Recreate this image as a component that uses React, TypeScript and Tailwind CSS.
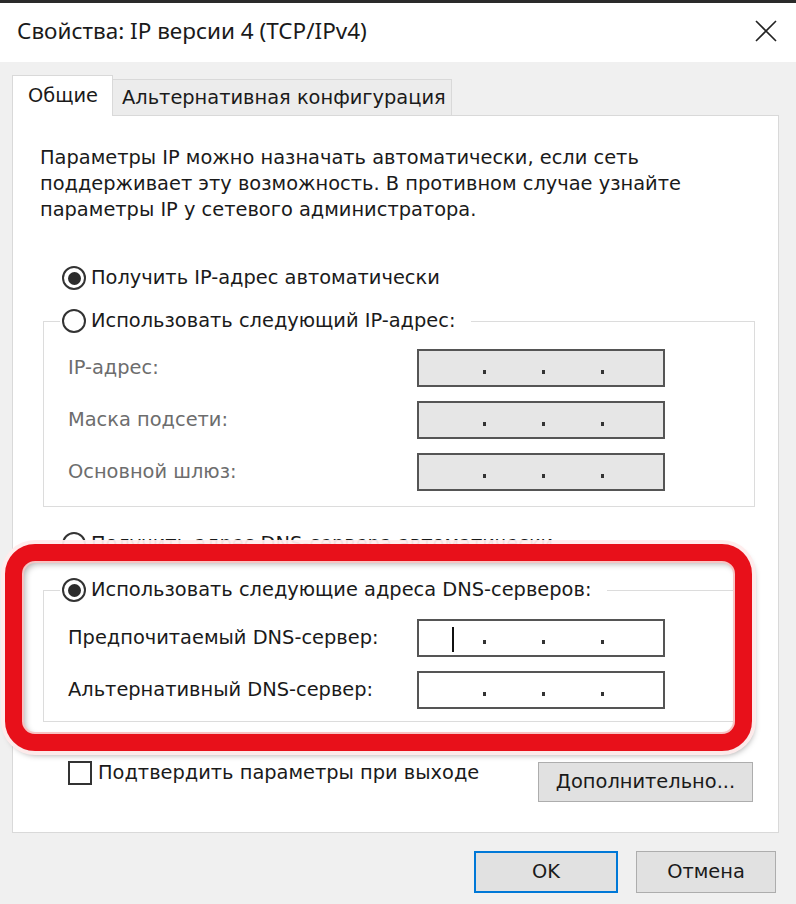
import React from "react";

function Radio({ checked }: { checked?: boolean }) {
  return (
    <span className="w-[24px] h-[24px] rounded-full border-2 border-[#333] bg-white flex items-center justify-center shrink-0">
      {checked && <span className="w-[13px] h-[13px] rounded-full bg-[#2b2b2b]" />}
    </span>
  );
}

function IpInput({ disabled, cursor }: { disabled?: boolean; cursor?: boolean }) {
  return (
    <div
      className={
        "relative h-[38px] w-[248px] border-2 border-[#555] flex items-end pb-[11px] pl-[64px] gap-[56px] " +
        (disabled ? "bg-[#e6e6e6]" : "bg-white")
      }
    >
      {cursor && <span className="absolute left-[33px] top-[6px] w-[2px] h-[25px] bg-[#111]" />}
      <span className="w-[3px] h-[4px] bg-[#333]" />
      <span className="w-[3px] h-[4px] bg-[#333]" />
      <span className="w-[3px] h-[4px] bg-[#333]" />
    </div>
  );
}

function Row({ label, disabled, cursor }: { label: string; disabled?: boolean; cursor?: boolean }) {
  return (
    <div className="grid grid-cols-[373px_248px] items-center h-[38px]">
      <span className={"pl-[24px] " + (disabled ? "text-[#6d6d6d]" : "text-[#1a1a1a]")}>{label}</span>
      <IpInput disabled={disabled} cursor={cursor} />
    </div>
  );
}

export default function App() {
  return (
    <div className="w-[796px] h-[904px] bg-[#f0f0f0] relative overflow-hidden font-['DejaVu_Sans',sans-serif] text-[19.4px] text-[#1a1a1a] leading-[26px]">
      <div className="h-[3px] bg-[#2a2a2a]" />
      <div className="h-[59px] bg-white flex items-center justify-between pl-[17px] pr-[18px]">
        <span className="font-['Noto_Sans',sans-serif] text-[22.5px] text-[#1a1a1a] -mt-[4px]">
          Свойства: IP версии 4 (TCP/IPv4)
        </span>
        <svg width="24" height="24" viewBox="0 0 24 24" className="-mt-[4px]">
          <path d="M2 2 L22 22 M22 2 L2 22" stroke="#222" strokeWidth="1.6" fill="none" />
        </svg>
      </div>

      <div className="pl-[12px] pr-[17px] pt-[13px]">
        <div className="flex items-start h-[40px] relative z-10">
          <div className="h-[41px] w-[101px] bg-white border-l border-t border-r border-[#d9d9d9] flex items-center pl-[15px] pb-[1px]">
            Общие
          </div>
          <div className="mt-[4px] h-[36px] w-[339px] bg-[#ececec] border-t border-r border-[#d9d9d9] flex items-center pl-[9px] whitespace-nowrap">
            Альтернативная конфигурация
          </div>
        </div>

        <div className="h-[718px] bg-white border border-[#d9d9d9] flex flex-col">
          <p className="mt-[29px] ml-[27px] whitespace-nowrap">
            Параметры IP можно назначать автоматически, если сеть
            <br />
            поддерживает эту возможность. В противном случае узнайте
            <br />
            параметры IP у сетевого администратора.
          </p>

          <div className="mt-[42px] ml-[49px] h-[26px] flex items-center gap-[5px]">
            <Radio checked />
            <span>Получить IP-адрес автоматически</span>
          </div>

          <fieldset className="mt-[17px] ml-[30px] mr-[23px] border border-[#dcdcdc] pb-[15px]">
            <legend className="ml-[16px] pl-[2px] pr-[16px] h-[26px] flex items-center gap-[5px]">
              <Radio />
              <span>Использовать следующий IP-адрес:</span>
            </legend>
            <div className="pt-[15px] flex flex-col gap-[14px]">
              <Row label="IP-адрес:" disabled />
              <Row label="Маска подсети:" disabled />
              <Row label="Основной шлюз:" disabled />
            </div>
          </fieldset>

          <div className="mt-[24px] ml-[49px] h-[26px] flex items-center gap-[5px]">
            <Radio />
            <span>Получить адрес DNS-сервера автоматически</span>
          </div>

          <fieldset className="mt-[20px] ml-[30px] mr-[23px] border border-[#dcdcdc] pb-[12px]">
            <legend className="ml-[16px] pl-[2px] pr-[16px] h-[26px] flex items-center gap-[5px]">
              <Radio checked />
              <span>Использовать следующие адреса DNS-серверов:</span>
            </legend>
            <div className="pt-[16px] flex flex-col gap-[14px]">
              <Row label="Предпочитаемый DNS-сервер:" cursor />
              <Row label="Альтернативный DNS-сервер:" />
            </div>
          </fieldset>

          <div className="mt-[40px] ml-[55px] mr-[25px] flex items-start justify-between">
            <div className="flex items-center gap-[6px] h-[24px] -mt-[1px]">
              <span className="w-[24px] h-[24px] border-2 border-[#333] bg-white" />
              <span>Подтвердить параметры при выходе</span>
            </div>
            <button className="h-[40px] w-[215px] bg-[#e1e1e1] border border-[#adadad] text-[#1a1a1a]">
              Дополнительно...
            </button>
          </div>
        </div>
      </div>

      <div className="flex justify-end pt-[18px] pr-[20px] gap-[18px]">
        <button className="h-[42px] w-[144px] bg-[#e1e1e1] border-2 border-[#0078d7]">OK</button>
        <button className="h-[42px] w-[140px] bg-[#e1e1e1] border border-[#adadad]">Отмена</button>
      </div>

      <div className="absolute left-[5px] top-[544px] w-[747px] h-[207px] rounded-[30px] border-[17px] border-[#e8101a] shadow-[0_0_0_4px_rgba(255,236,236,0.95),2px_4px_6px_rgba(0,0,0,0.35),inset_0_0_0_2px_#f7c4c4,inset_3px_3px_6px_rgba(0,0,0,0.3)]" />
    </div>
  );
}
